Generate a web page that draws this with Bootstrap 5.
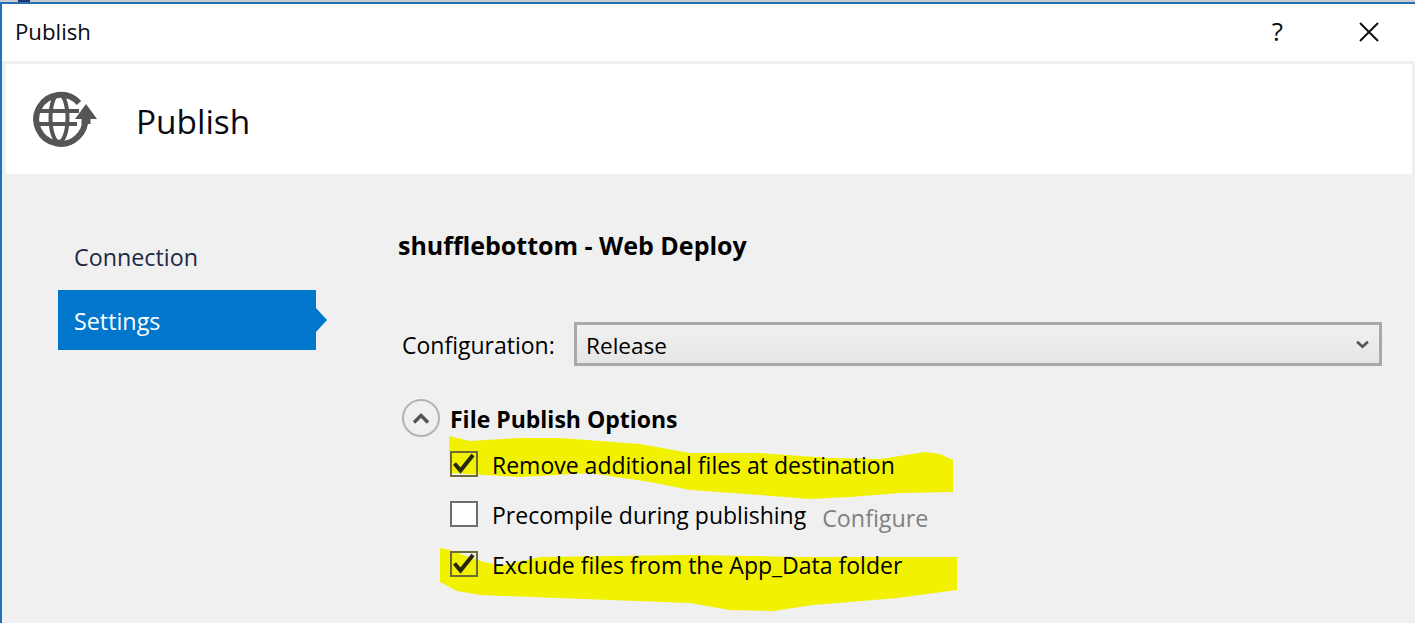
<!DOCTYPE html>
<html lang="en">
<head>
<meta charset="utf-8">
<title>Publish</title>
<link href="https://cdn.jsdelivr.net/npm/bootstrap@5.3.0/dist/css/bootstrap.min.css" rel="stylesheet">
<style>
html,body{height:623px;overflow:hidden;background:#fff}
body{font-family:"Open Sans","Noto Sans",sans-serif;color:#0a0a14;position:relative}
.screen-strip{height:2px;background:#c9ced6;position:relative}
.screen-strip i{position:absolute;left:18px;top:0;width:12px;height:2px;background:#1b3a78}
.dlg{height:621px;border-top:2px solid #2a6fb0;border-left:2px solid #1f72bd;display:flex;flex-direction:column;background:#f0f0f0}
.tbar{height:57px;background:#fff;padding-left:13px;padding-right:36px;padding-bottom:2px;font-size:22.2px}
.tbar .q{font-size:26px;margin-right:76px}
.hdr{height:110px;margin:3px 3px 0 4px;background:#fff;padding-left:24px}
.hdr h1{font-size:33.4px;font-weight:400;margin:0 0 0 36px;position:relative;top:2px}
.body-area{flex:1;position:relative;padding:54px 33px 0 56px}
.side{width:258px;flex:none}
.side-item{height:60px;padding-left:16px;padding-bottom:2px;font-size:23.3px;color:#1e2a44;display:flex;align-items:center}
.side-item.on{background:#0077cc;color:#fff;margin-top:2px;position:relative;padding-top:3px;padding-bottom:0}
.side-item.on::after{content:"";position:absolute;left:100%;top:18px;border-left:11px solid #0077cc;border-top:12px solid transparent;border-bottom:12px solid transparent}
.main-col{margin-left:82px;flex:1;min-width:0;position:relative;z-index:1}
.deploy{font-size:25px;font-weight:700;line-height:34px;margin:0;color:#000}
.cfg{margin-top:60px;height:44px}
.cfg label{font-size:23px;margin-left:4px;width:172px;flex:none;color:#000;padding-top:3px}
.cfg-select{height:44px;border:3px solid #a9a9a9;border-radius:0;font-size:22.6px;color:#000;padding:3px 40px 0 9px;
 background-color:#ececec;background-image:url("data:image/svg+xml,%3Csvg xmlns='http://www.w3.org/2000/svg' viewBox='0 0 12 8'%3E%3Cpath d='M1 1.5l5 4.5 5-4.5' fill='none' stroke='%23555' stroke-width='2.4'/%3E%3C/svg%3E"),linear-gradient(#f0f0f0,#e6e6e6);background-repeat:no-repeat,no-repeat;background-position:right 10px center,0 0;background-size:13px 9px,100% 100%}
.opts{margin-top:32px}
.opt-title{height:40px;margin-left:4px}
.round-btn{width:38px;height:38px;border:2px solid #b3b3b3;border-radius:50%;background:transparent;padding:0;flex:none;display:flex;align-items:center;justify-content:center}
.opt-title strong{font-size:23px;margin-left:10px;color:#000;font-weight:700;padding-top:3px}
.opt-list{margin-left:52px;margin-top:2px}
.opt-row{height:50px;display:flex;align-items:center;margin:0;padding:0}
.opt-row .form-check-input{width:28px;height:26px;margin:-3px 14px 0 0;border:2px solid #6e6e6e;border-radius:0;background-color:#fff;float:none;flex:none}
.opt-row .form-check-input:checked{background-color:transparent;border-color:#6e6b3a;background-image:url("data:image/svg+xml,%3Csvg xmlns='http://www.w3.org/2000/svg' viewBox='0 0 24 22'%3E%3Cpath d='M2.5 10.5l6 7L21 2' fill='none' stroke='%23262610' stroke-width='4'/%3E%3C/svg%3E");background-size:100% 100%}
.opt-row .form-check-label{font-size:23px;color:#000;opacity:1!important}
.cfg-link{font-size:23.3px;color:#808080;margin-left:16px;position:relative;top:3px}
.marker{position:absolute;left:0;top:0;z-index:0;pointer-events:none}
</style>
</head>
<body>
<svg class="marker" width="1415" height="623" viewBox="0 0 1415 623" aria-hidden="true">
<path fill="#f2f200" d="M449 436L470 441L520 438L560 438L640 444L690 453L760 453L830 458L880 459L925 452L940 454L953 460L953 492L900 493L850 497L810 499L760 495L690 490L650 482L590 473L520 477L450 473Z"/>
<path fill="#f2f200" d="M440 548L450 550L477 560L500 566L540 557L690 555L800 557L957 557L957 590L897 598L850 602L813 605L773 611L730 610L690 603L557 598L480 595L457 591L440 582Z"/>
</svg>
<div class="screen-strip"><i></i></div>
<div class="dlg">
  <div class="tbar d-flex align-items-center justify-content-between">
    <span>Publish</span>
    <div class="d-flex align-items-center">
      <span class="q">?</span>
      <svg width="20" height="20" viewBox="0 0 20 20"><path d="M1 1l18 18M19 1L1 19" stroke="#111" stroke-width="2" fill="none"/></svg>
    </div>
  </div>
  <div class="hdr d-flex align-items-center">
    <svg width="70" height="64" viewBox="30 87 70 64">
      <g fill="none" stroke="#555">
        <path d="M79 103A24.500 24.500 0 1 0 85 116" stroke-width="6"/>
        <ellipse cx="59" cy="118" rx="8.500" ry="24" stroke-width="4"/>
        <path d="M38 111H79M37 124H77" stroke-width="4"/>
      </g>
      <path fill="#555" d="M75 119L86 104L97 119H90.500V124H81.500V119Z"/>
    </svg>
    <h1>Publish</h1>
  </div>
  <div class="body-area d-flex">
    <div class="side">
      <div class="side-item">Connection</div>
      <div class="side-item on">Settings</div>
    </div>
    <div class="main-col">
      <h2 class="deploy">shufflebottom - Web Deploy</h2>
      <div class="cfg d-flex align-items-center">
        <label for="cfgSel">Configuration:</label>
        <select id="cfgSel" class="form-select cfg-select"><option>Release</option></select>
      </div>
      <div class="opts">
        <div class="opt-title d-flex align-items-center">
          <button type="button" class="round-btn" aria-label="Collapse"><svg width="18" height="11" viewBox="0 0 18 11"><path d="M2 9.500l7-7 7 7" fill="none" stroke="#555" stroke-width="3.5"/></svg></button>
          <strong>File Publish Options</strong>
        </div>
        <div class="opt-list">
          <div class="form-check opt-row"><input class="form-check-input" type="checkbox" id="o1" checked><label class="form-check-label" for="o1">Remove additional files at destination</label></div>
          <div class="form-check opt-row"><input class="form-check-input" type="checkbox" id="o2"><label class="form-check-label" for="o2">Precompile during publishing</label><span class="cfg-link">Configure</span></div>
          <div class="form-check opt-row"><input class="form-check-input" type="checkbox" id="o3" checked><label class="form-check-label" for="o3">Exclude files from the App_Data folder</label></div>
        </div>
      </div>
    </div>
  </div>
</div>
<script src="https://cdn.jsdelivr.net/npm/bootstrap@5.3.0/dist/js/bootstrap.bundle.min.js"></script>
</body>
</html>
